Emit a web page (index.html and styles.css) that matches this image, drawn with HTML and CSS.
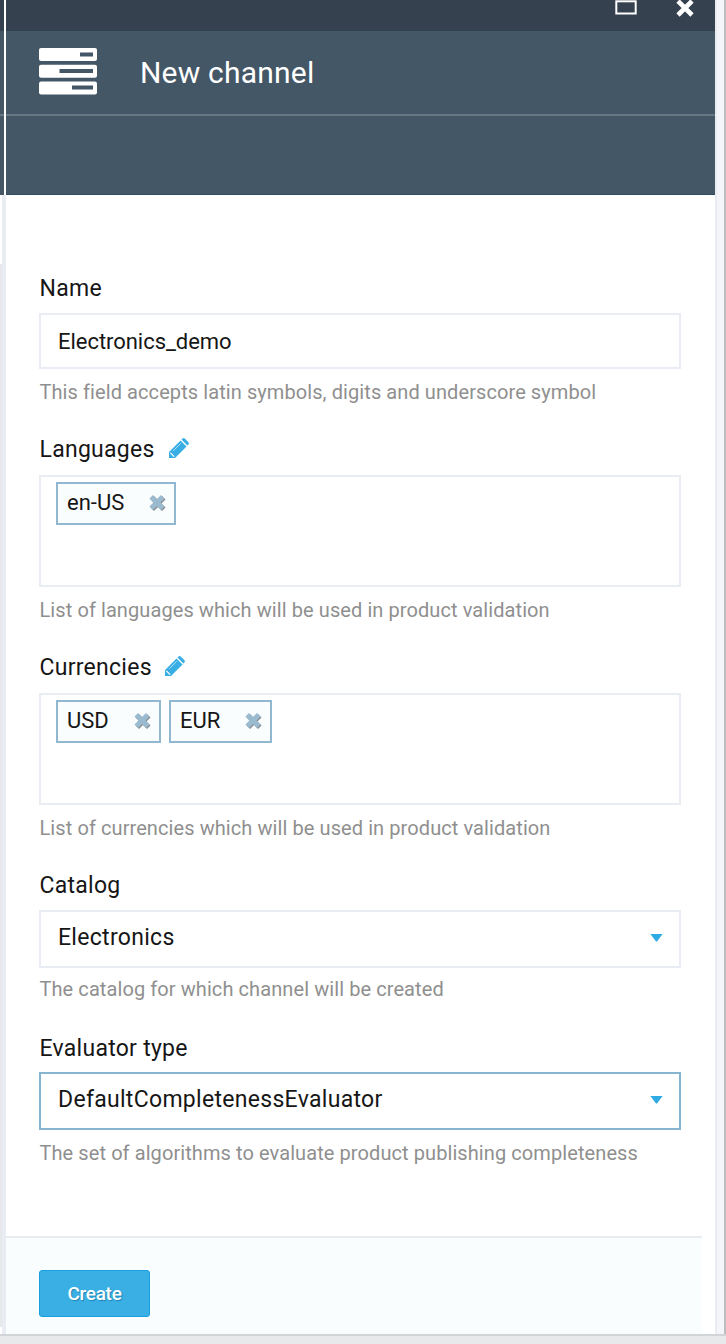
FILE: index.html
```html
<!DOCTYPE html>
<html lang="en">
<head>
<meta charset="utf-8">
<title>New channel</title>
<link rel="stylesheet" href="styles.css">
</head>
<body>
<svg class="defs" aria-hidden="true">
  <symbol id="pencil" viewBox="0 0 20 20">
    <path d="M0 20V14L11.5 2.5 17.5 8.5 6 20Z M12.5 1.5 13.5.6Q14.6-.4 15.8.6L19.4 4.2Q20.4 5.3 19.4 6.4L18.4 7.5Z" fill="#38aee5"/>
    <path d="M1.7 14.7 5.3 18.3 4.3 18.5 3.5 17.7V16.5H2.3L1.5 15.7Z M4.2 12.9 11.8 5.3" fill="#fff" stroke="#fff" stroke-width=".6"/>
  </symbol>
  <symbol id="cross" viewBox="0 0 16 16">
    <path d="M4 4 12 12M12 4 4 12" stroke-width="5" stroke-linecap="square" stroke-linejoin="round" stroke="currentColor" fill="none"/>
  </symbol>
</svg>
<div class="workspace">
  <div class="edge-left"><div class="edge-head"><i class="edge-bar"></i><i class="edge-tools"></i></div><div class="edge-thumb"></div><div class="edge-foot"></div></div>
  <section class="blade">
    <div class="window-bar">
      <svg class="maximize" viewBox="0 0 22 15"><rect x="1.3" y="1.3" width="19.4" height="12.2" fill="none" stroke="#fff" stroke-width="2"/></svg>
      <svg class="close" viewBox="0 0 20 20"><path d="M3 3 17 17M17 3 3 17" stroke="#fff" stroke-width="4.6"/></svg>
    </div>
    <header class="head">
      <svg class="head-icon" viewBox="0 0 58 47">
        <g fill="#fff"><rect width="58" height="13" rx="2"/><rect y="16.8" width="58" height="13" rx="2"/><rect y="33.4" width="58" height="13" rx="2"/></g>
        <path d="M41 6.5h13M20.5 23h33.5M33 39.5h21" stroke="#445766" stroke-width="4"/>
      </svg>
      <h1 class="title">New channel</h1>
    </header>
    <div class="toolbar"></div>
    <form class="form">
      <div class="field name">
        <label class="label">Name</label>
        <div class="control input">Electronics_demo</div>
        <p class="hint">This field accepts latin symbols, digits and underscore symbol</p>
      </div>
      <div class="field languages">
        <label class="label">Languages <svg class="edit"><use href="#pencil"/></svg></label>
        <div class="control tags"><span class="tag en">en-US<svg class="remove"><use href="#cross"/></svg></span></div>
        <p class="hint">List of languages which will be used in product validation</p>
      </div>
      <div class="field currencies">
        <label class="label">Currencies <svg class="edit"><use href="#pencil"/></svg></label>
        <div class="control tags"><span class="tag usd">USD<svg class="remove"><use href="#cross"/></svg></span><span class="tag eur">EUR<svg class="remove"><use href="#cross"/></svg></span></div>
        <p class="hint">List of currencies which will be used in product validation</p>
      </div>
      <div class="field catalog">
        <label class="label">Catalog</label>
        <div class="control select">Electronics<i class="arrow"></i></div>
        <p class="hint">The catalog for which channel will be created</p>
      </div>
      <div class="field evaluator">
        <label class="label">Evaluator type</label>
        <div class="control select focused">DefaultCompletenessEvaluator<i class="arrow"></i></div>
        <p class="hint">The set of algorithms to evaluate product publishing completeness</p>
      </div>
    </form>
    <footer class="actions"><button class="create" type="button">Create</button></footer>
  </section>
  <div class="edge-right"></div>
</div>
<div class="status"></div>
</body>
</html>
```

FILE: styles.css
```css
* { box-sizing: border-box; }
body { margin: 0; width: 726px; height: 1344px; overflow: hidden; background: #fff; font-family: Roboto, sans-serif; color: #161616; }
.defs { display: block; width: 0; height: 0; }
.workspace { display: grid; grid-template-columns: 6px 709px 11px; height: 1334px; }
.edge-left { display: flex; flex-direction: column; border-right: 4px solid #e9ecf3; }
.edge-head { height: 195px; width: 6px; flex: none; display: flex; flex-direction: column; background: #445766; border-right: 2px solid #fff; }
.edge-bar { height: 31px; background: #35414e; }
.edge-tools { height: 85px; border-bottom: 2px solid #687984; }
.edge-thumb { margin-top: 69px; flex: 1; background: #e6e8ec; }
.edge-foot { height: 7px; }
.edge-right { background: #f3f5fa; border-left: 2px solid #e9ecf3; border-right: 2px solid #bbbdbf; }
.blade { display: flex; flex-direction: column; background: #fff; }
.window-bar { height: 31px; flex: none; display: flex; justify-content: flex-end; background: #35414e; padding-right: 20px; }
.maximize { width: 22px; height: 15px; margin: 0 38px 0 0; }
.close { width: 20px; height: 20px; margin-top: -2px; }
.head { height: 85px; flex: none; display: flex; align-items: center; padding-left: 33px; background: #445766; border-bottom: 2px solid #687984; }
.head-icon { width: 58px; height: 47px; margin-top: -2px; }
.title { margin: 1px 0 0 43px; color: #fff; font-size: 30px; font-weight: 400; line-height: 40px; letter-spacing: .2px; }
.toolbar { height: 79px; flex: none; background: #445766; border-bottom: 1px solid #2f4b62; }
.form { padding: 79px 34px 0 33.5px; flex: 1; }
.label { display: flex; align-items: center; height: 30px; font-size: 23px; line-height: 30px; letter-spacing: .27px; }
.edit { width: 20px; height: 20px; margin: -4px 0 0 14.5px; }
.currencies .edit { margin-left: 13.5px; }
.control { display: flex; width: 642px; margin-left: -.5px; border: 2px solid #e9ecf3; background: #fff; margin-top: 10px; }
.name .control { margin-top: 9px; }
.input, .select { align-items: center; height: 56px; padding: 0 17px; font-size: 22px; letter-spacing: -.04px; }
.select { height: 58px; font-size: 23px; letter-spacing: .3px; padding: 0 16px 3px 17px; justify-content: space-between; }
.tags { height: 112px; align-items: flex-start; gap: 8px; padding: 5px 15px; }
.hint { margin: 11px 0 0; height: 24px; line-height: 24px; color: #8f8f8f; font-size: 20px; letter-spacing: .085px; white-space: nowrap; }
.name { height: 161px; }
.languages { height: 218px; }
.currencies { height: 218px; }
.catalog { height: 163px; }
.catalog .control { margin-top: 9px; }
.catalog .hint { margin-top: 9px; }
.evaluator .control { margin-top: 8px; }
.tag { display: flex; align-items: center; justify-content: space-between; height: 43px; padding: 0 9px 2px 9px; border: 2px solid #91b8d0; background: #f9fdfe; font-size: 22px; }
.en { width: 120px; }
.usd { width: 105px; }
.eur { width: 103px; }
.remove { width: 16px; height: 17px; color: #9abbcf; filter: drop-shadow(1px 1px 0 #8a8f94); }
.arrow { width: 13px; height: 8px; background: #2eabe3; clip-path: polygon(0 0, 100% 0, 54% 100%, 46% 100%); margin-top: 0; }
.focused { border-color: #86b5cf; }
.actions { width: 696px; height: 98px; padding: 32px 33px 0; border-top: 2px solid #e8ebef; background: #f9fdfe; }
.create { display: block; width: 111px; height: 47px; padding: 0; border: 1px solid #16a0df; border-radius: 3px; background: #39afe4; color: #fff; font: 500 19px Roboto, sans-serif; letter-spacing: -.3px; text-shadow: 1px 1px 1px #2184b3; }
.status { height: 10px; border-top: 2px solid #d2d5d7; background: #e7e9ea; }
```
